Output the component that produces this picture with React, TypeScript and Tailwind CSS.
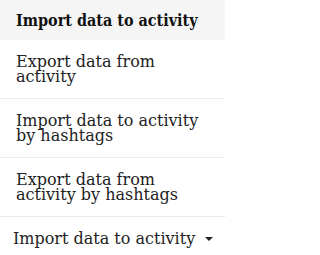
const items = [
  "Export data from activity",
  "Import data to activity by hashtags",
  "Export data from activity by hashtags",
];

export default function App() {
  return (
    <div className="w-[225px] h-[255px] bg-white text-[#222] text-[16px] leading-[15px]" style={{ fontFamily: '"DejaVu Serif", serif' }}>
      <ul>
        <li className="h-[40px] flex items-center px-[16px] bg-[#f5f5f5] font-bold text-[#111] whitespace-nowrap [font-family:'DejaVu_Serif_Condensed','DejaVu_Serif',serif]">
          Import data to activity
        </li>
        {items.map((label) => (
          <li key={label} className="px-[16px] py-[14px] border-b border-[#eeeeee]">
            {label}
          </li>
        ))}
      </ul>
      <div className="border-t border-dotted border-[#e5e5e5] -mt-px">
        <button className="flex items-center gap-[10px] pl-[13px] pt-[14px] text-[#222]">
          <span>Import data to activity</span>
          <svg width="8" height="4" viewBox="0 0 8 4" className="mt-[1px]">
            <path d="M0 0h8L4 4z" fill="#222" />
          </svg>
        </button>
      </div>
    </div>
  );
}
